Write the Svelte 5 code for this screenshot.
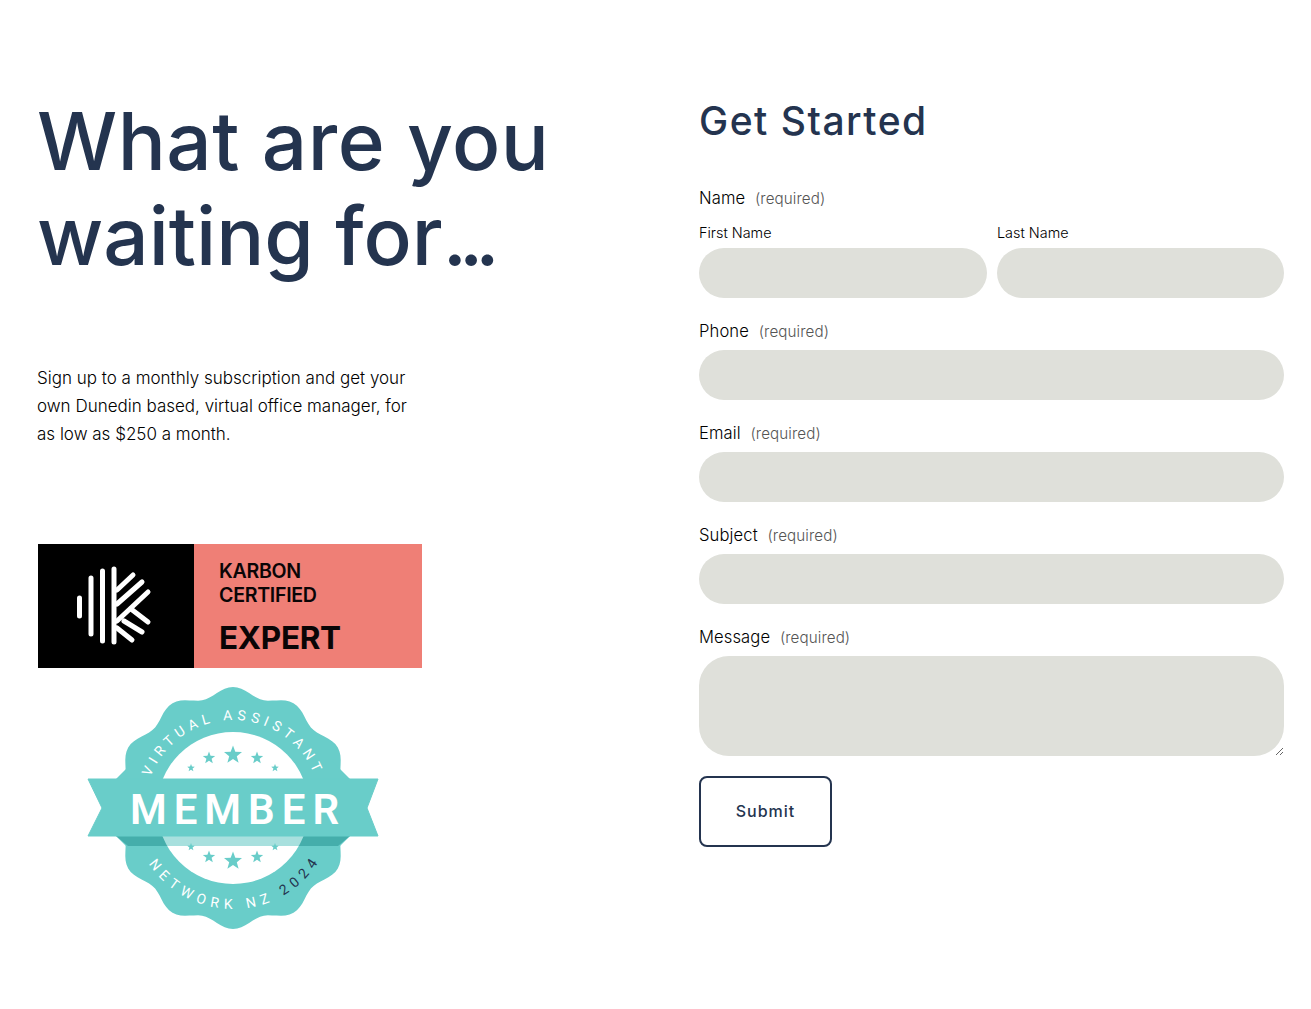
<script>
  const cx = 233, cy = 808;
  function scallop() {
    const pts = [];
    for (let i = 0; i < 360; i += 2) {
      const a = (i * Math.PI) / 180;
      const r = 116.500 + 4.500 * Math.cos(12 * a);
      pts.push(`${(cx + r * Math.sin(a)).toFixed(1)},${(cy - r * Math.cos(a)).toFixed(1)}`);
    }
    return pts.join(' ');
  }
  function star(x, y, R) {
    const pts = [];
    for (let i = 0; i < 10; i++) {
      const r = i % 2 ? R * 0.42 : R;
      const a = (i * 36 * Math.PI) / 180;
      pts.push(`${(x + r * Math.sin(a)).toFixed(1)},${(y - r * Math.cos(a)).toFixed(1)}`);
    }
    return pts.join(' ');
  }
  const stars = [[233,755,9.5],[209,758,6.5],[257,758,6.5],[191,768,4],[275,768,4],[233,861,9.5],[209,857,6.5],[257,857,6.5],[191,847,4],[275,847,4]];
  const fields = [['Phone','text'],['Email','email'],['Subject','text']];
</script>

<main class="page">
  <section class="left">
    <h1>What are you<br /><span class="second">waiting for<span class="dots">...</span></span></h1>
    <p class="intro">Sign up to a monthly subscription and get your<br />own Dunedin based, virtual office manager, for<br />as low as $250 a month.</p>

    <div class="karbon">
      <div class="mark">
        <svg width="156" height="124" viewBox="38 544 156 124" aria-hidden="true">
          <g stroke="#fff" stroke-width="5" stroke-linecap="round" fill="none">
            <path d="M79.500 598V616M91 578V634M102.500 571V641M114 569V642" />
            <path d="M117 590L133 575M117 604L142 582M117 621L148 592" />
            <path d="M131 609L148 622M124 621L142 632M117 628L132 640" />
          </g>
        </svg>
      </div>
      <div class="karbon-text">
        <div class="k1">KARBON<br />CERTIFIED</div>
        <div class="k2">EXPERT</div>
      </div>
    </div>

    <svg class="badge" width="292" height="244" viewBox="87 686 292 244" role="img" aria-label="Virtual Assistant Member Network NZ 2024">
      <defs>
        <path id="arcTop" d="M 145 808 A 88 88 0 0 1 321 808" />
        <path id="arcBottom" d="M 132 808 A 101 101 0 0 0 334 808" />
        <clipPath id="foldClip"><circle cx="233" cy="808" r="76" /></clipPath>
      </defs>
      <polygon points={scallop()} fill="#69cdc9" />
      <polygon points="116,779 134,761 332,761 350,779 350,836 332,854 134,854 116,836" fill="#69cdc9" />
      <circle cx="233" cy="808" r="76" fill="#fff" />
      <polygon points="116,836 350,836 338,846 128,846" fill="#45aeab" />
      <rect x="150" y="836" width="170" height="10" fill="#a8e0de" clip-path="url(#foldClip)" />
      <polygon points="88,779 378,779 367,808 378,836 88,836 102,808" fill="#69cdc9" stroke="#69cdc9" stroke-width="1" stroke-linejoin="round" />
      {#each stars as s}
        <polygon points={star(s[0], s[1], s[2])} fill="#69cdc9" />
      {/each}
      <text class="member" x="238" y="824" text-anchor="middle">MEMBER</text>
      <text class="arc" text-anchor="middle"><textPath href="#arcTop" startOffset="50%">VIRTUAL ASSISTANT</textPath></text>
      <text class="arc bottom" text-anchor="middle"><textPath href="#arcBottom" startOffset="51%">NETWORK NZ <tspan class="year">2024</tspan></textPath></text>
    </svg>
  </section>

  <section class="right">
    <h2>Get Started</h2>
    <form onsubmit={(e) => e.preventDefault()}>
      <div class="field" role="group" aria-label="Name">
        <div class="label namelabel">Name <span class="req">(required)</span></div>
        <div class="names">
          <label class="sub">First Name<input type="text" /></label>
          <label class="sub">Last Name<input type="text" /></label>
        </div>
      </div>
      {#each fields as f}
        <label class="field">
          <span class="label">{f[0]} <span class="req">(required)</span></span>
          <input type={f[1]} />
        </label>
      {/each}
      <label class="field">
        <span class="label">Message <span class="req">(required)</span></span>
        <textarea></textarea>
      </label>
      <button type="submit">Submit</button>
    </form>
  </section>
</main>

<style>
  :global(body) {
    margin: 0;
    background: #fff;
    color: #000;
    font-family: "Inter", "Liberation Sans", sans-serif;
  }
  .page {
    display: grid;
    grid-template-columns: 662px 585px;
    padding: 0 27px 0 37px;
    min-height: 1009px;
    box-sizing: border-box;
  }
  .left {
    display: flex;
    flex-direction: column;
    align-items: flex-start;
    padding-top: 93px;
  }
  h1 {
    margin: 0;
    font-size: 80px;
    line-height: 95px;
    font-weight: 500;
    color: #24344f;
    letter-spacing: 0.5px;
    white-space: nowrap;
  }
  .second { letter-spacing: 0; }
  .dots { letter-spacing: -8px; }
  .intro {
    margin: 81px 0 0;
    font-size: 17px;
    line-height: 28px;
    font-weight: 300;
    white-space: nowrap;
  }
  .karbon {
    display: flex;
    margin: 96px 0 0 1px;
    width: 384px;
    height: 124px;
    background: #ef7f76;
  }
  .mark {
    width: 156px;
    height: 124px;
    background: #000;
    flex: none;
  }
  .mark svg { display: block; }
  .karbon-text {
    padding: 15px 0 0 25px;
    font-weight: 600;
    color: #0a0506;
  }
  .k1 {
    font-size: 19.600px;
    line-height: 24px;
    letter-spacing: -0.3px;
  }
  .k2 {
    margin-top: 12px;
    font-size: 31.500px;
    line-height: 38px;
    font-weight: 700;
    letter-spacing: -0.3px;
  }
  .badge {
    display: block;
    margin: 18px 0 0 50px;
  }
  .member {
    font-family: "Roboto", sans-serif;
    font-weight: 600;
    font-size: 42px;
    letter-spacing: 7px;
    fill: #fff;
  }
  .arc {
    font-family: "Roboto", sans-serif;
    font-size: 14px;
    letter-spacing: 4.800px;
    fill: #fff;
  }
  .arc.bottom { letter-spacing: 5.500px; }
  .year { fill: #24344f; }
  .right { padding-top: 94px; }
  h2 {
    margin: 0 0 39px;
    font-size: 39px;
    line-height: 54px;
    font-weight: 500;
    color: #24344f;
    letter-spacing: 1.500px;
    white-space: nowrap;
  }
  form {
    display: flex;
    flex-direction: column;
    gap: 22px;
    align-items: stretch;
  }
  .field {
    display: flex;
    flex-direction: column;
    min-width: 0;
  }
  .label {
    display: block;
    height: 22px;
    margin-bottom: 8px;
    font-size: 16.600px;
    line-height: 22px;
    font-weight: 300;
    letter-spacing: 0.1px;
  }
  .namelabel { margin-bottom: 15px; }
  .req {
    margin-left: 5px;
    font-size: 15.200px;
    color: #555;
    font-weight: 300;
  }
  .names {
    display: grid;
    grid-template-columns: 288px 287px;
    gap: 10px;
  }
  .sub {
    display: flex;
    flex-direction: column;
    gap: 6px;
    font-size: 14.400px;
    line-height: 18px;
    font-weight: 300;
  }
  input, textarea {
    display: block;
    box-sizing: border-box;
    width: 100%;
    height: 50px;
    border: 0;
    border-radius: 25px;
    background: #dfe0da;
    outline: none;
    margin: 0;
  }
  textarea {
    height: 100px;
    border-radius: 30px;
    resize: vertical;
  }
  button {
    align-self: flex-start;
    margin-top: -2px;
    width: 133px;
    height: 71px;
    padding: 0 0 2px;
    background: #fff;
    border: 2px solid #24344f;
    border-radius: 8px;
    color: #24344f;
    font: 500 16px "Inter", sans-serif;
    letter-spacing: 1px;
  }
</style>
